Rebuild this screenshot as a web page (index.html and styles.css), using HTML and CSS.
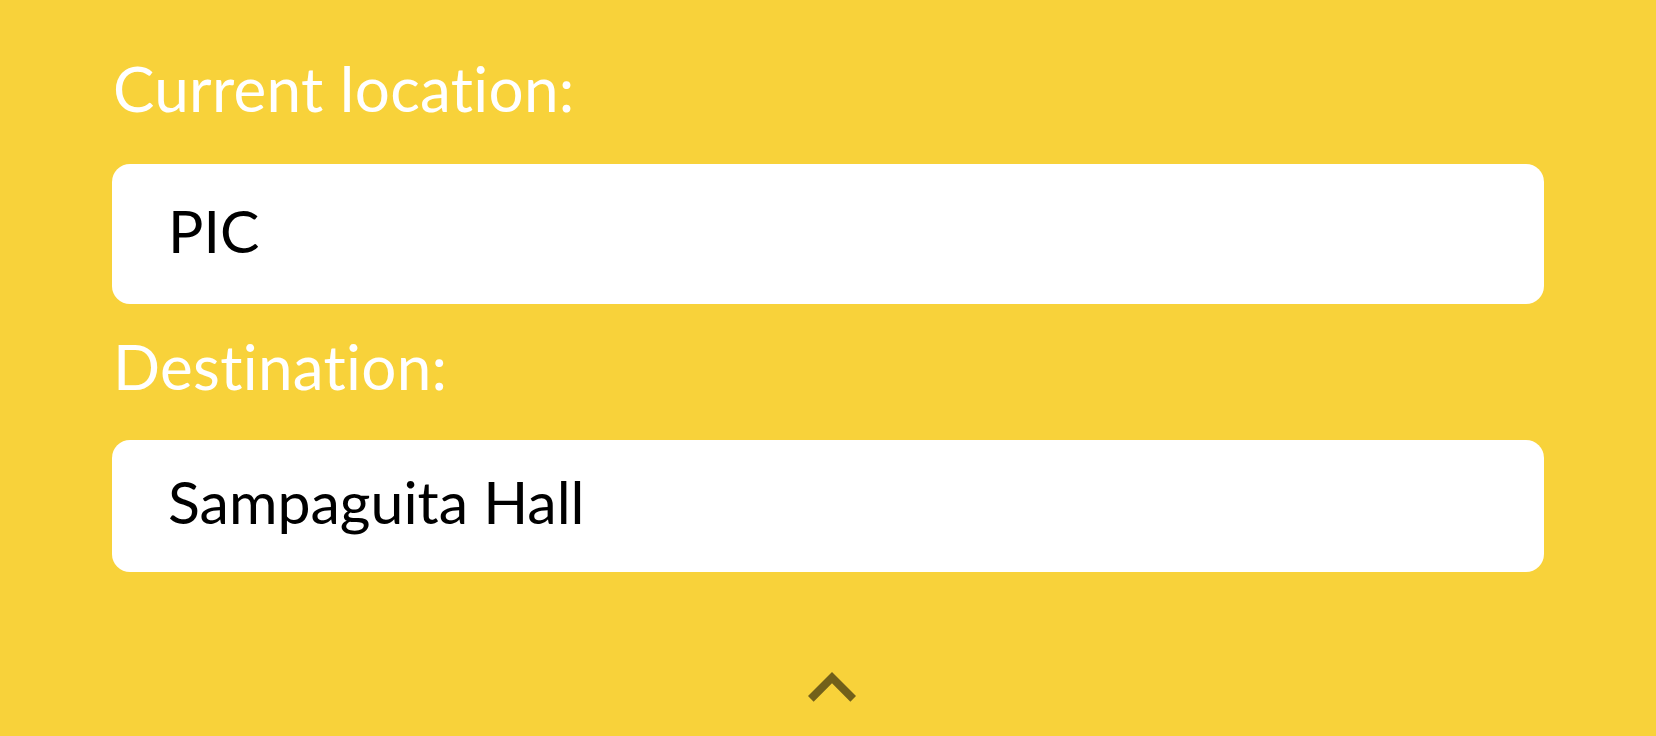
FILE: index.html
```html
<!DOCTYPE html>
<html lang="en">
<head>
<meta charset="utf-8">
<title>Route</title>
<link rel="stylesheet" href="styles.css">
</head>
<body>
<main class="panel">
  <div class="form">
    <label class="label label-first">Current location:</label>
    <div class="field field-first">PIC</div>
    <label class="label label-second">Destination:</label>
    <div class="field field-second">Sampaguita Hall</div>
  </div>
  <div class="toggle">
    <svg class="chevron" viewBox="0 0 24 24" width="96" height="96" aria-hidden="true">
      <path d="M12 8l-6 6 1.41 1.41L12 10.83l4.59 4.58L18 14z"/>
    </svg>
  </div>
</main>
</body>
</html>
```

FILE: styles.css
```css
html, body {
  margin: 0;
  padding: 0;
  height: 100%;
  background: #f8d23a;
  overflow: hidden;
}

.panel {
  height: 736px;
  display: flex;
  flex-direction: column;
  font-family: "Lato", "Open Sans", sans-serif;
  font-variant-ligatures: none;
}

.form {
  display: flex;
  flex-direction: column;
  padding: 0 112px;
}

.label {
  display: block;
  color: #ffffff;
  font-size: 62px;
  line-height: 64px;
  font-weight: 400;
  padding-left: 1px;
  letter-spacing: 0.3px;
}

.label-first {
  margin-top: 56px;
}

.label-second {
  margin-top: 30px;
}

.field {
  background: #ffffff;
  border-radius: 18px;
  color: #000000;
  font-size: 59px;
  display: flex;
  align-items: center;
  padding-left: 56px;
  box-sizing: border-box;
}

.field-first {
  height: 140px;
  margin-top: 44px;
  padding-bottom: 8px;
}

.field-second {
  height: 132px;
  margin-top: 42px;
  padding-bottom: 10px;
}

.toggle {
  margin-top: auto;
  display: flex;
  justify-content: center;
  padding-left: 7px;
}

.chevron {
  display: block;
  fill: rgba(0, 0, 0, 0.54);
}
```
